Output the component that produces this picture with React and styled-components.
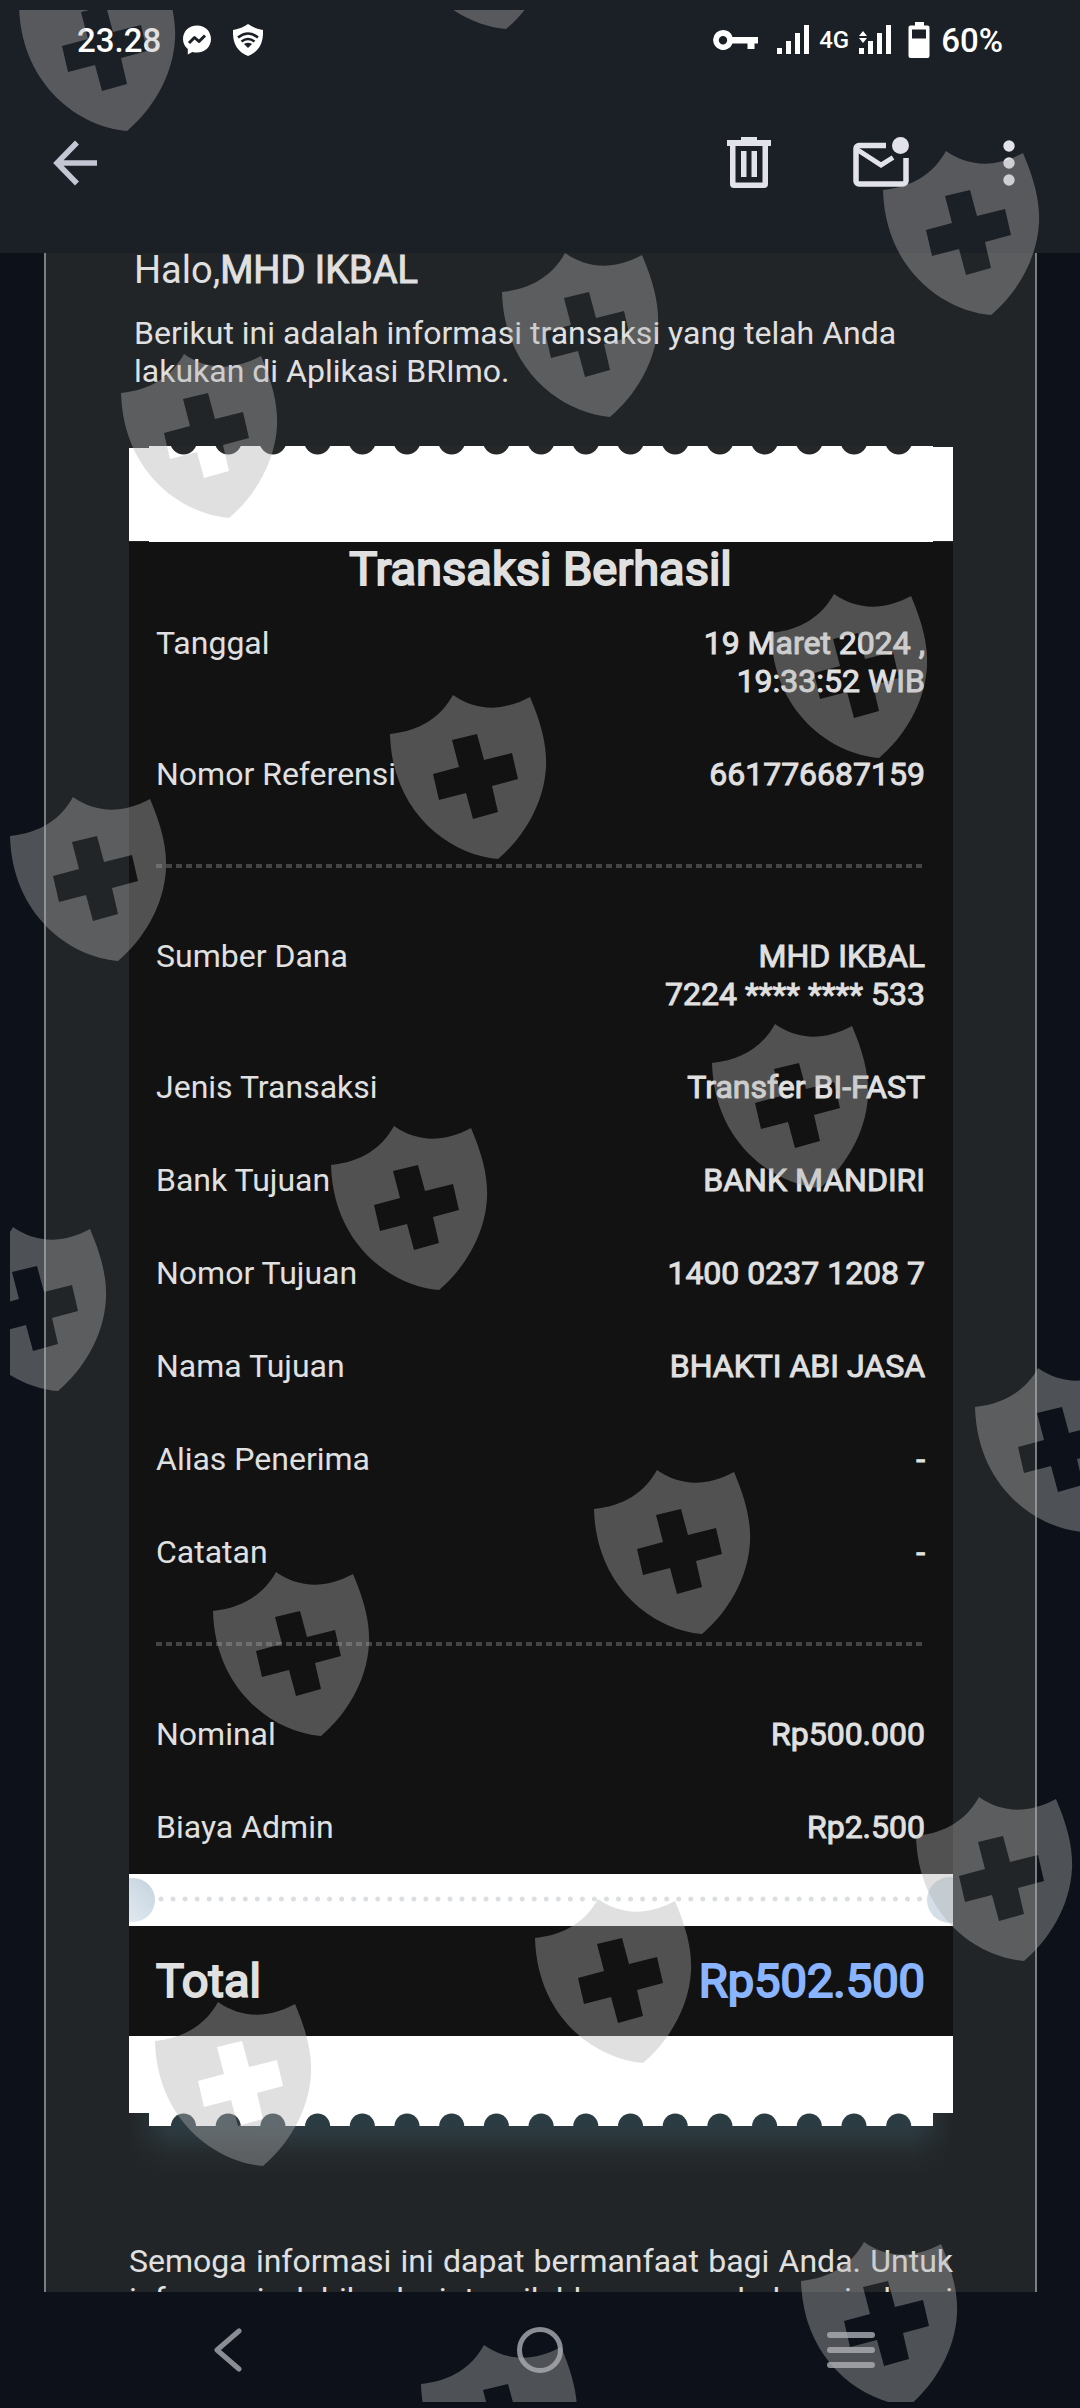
import React from 'react'
import styled, { createGlobalStyle } from 'styled-components'

const GlobalStyle = createGlobalStyle`
	* {
		box-sizing: border-box;
	}
	body {
		margin: 0;
		background-color: #0d1119;
		font-family: Roboto, "Liberation Sans", sans-serif;
	}
`

const Screen = styled.div`
	position: relative;
	display: flex;
	flex-direction: column;
	height: 100vh;
	overflow: hidden;
	color: #e0e0e0;
`

const Header = styled.header`
	flex: none;
	padding-bottom: 7px;
	background-color: #1b1f26;
`

const StatusBar = styled.div`
	display: flex;
	justify-content: space-between;
	height: 80px;
	padding: 0 77px;
	color: #ffffff;
	font-size: 33px;
	font-weight: 500;
`

const StatusGroup = styled.div`
	display: flex;
	align-items: center;
	gap: ${props => props.$gap}px;
`

const Network = styled.span`
	font-size: 24px;
`

const Toolbar = styled.div`
	display: flex;
	align-items: center;
	height: 166px;
	padding: 0 6px 0 10px;
	color: #e2e2ea;
`

const IconButton = styled.button`
	display: flex;
	align-items: center;
	justify-content: center;
	width: 130px;
	height: 120px;
	padding: 0;
	border: 0;
	background: none;
	color: inherit;
	cursor: pointer;
`

const BackButton = styled(IconButton)`
	margin-right: auto;
	color: #c4c6d4;
`

const Content = styled.main`
	flex: 1;
	min-height: 0;
	overflow: hidden;
`

const Mail = styled.article`
	margin: 0 43px 0 44px;
	padding: 0 82px 0 83px;
	border: solid #7b7f83;
	border-width: 0 2px;
	background-color: #222527;
`

const Intro = styled.div`
	padding-left: 5px;
	margin-bottom: 56px;
`

const Greeting = styled.p`
	margin: 0 0 27px;
	font-size: 38px;
	line-height: 34px;
`

const Strong = styled.strong`
	font-weight: 400;
	-webkit-text-stroke: 1px currentColor;
`

const Text = styled.p`
	margin: 0;
	font-size: 32px;
	line-height: 38px;
`

const Closing = styled(Text)`
	margin-top: 66px;
	text-align: justify;
	text-align-last: justify;
`

const Receipt = styled.section`
	> svg {
		display: block;
		width: 100%;
		height: auto;
	}
`

const Panel = styled.div`
	padding: 0 28px 1px 27px;
	background-color: #121212;
`

const Title = styled.h1`
	margin: 0;
	font-size: 47px;
	font-weight: 400;
	line-height: 54px;
	text-align: center;
	-webkit-text-stroke: 2px currentColor;
`

const Table = styled.table`
	width: 100%;
	border-collapse: collapse;
	font-size: 32px;
	line-height: 38px;
`

const Label = styled.th`
	padding: 28px 0 27px;
	font-weight: 400;
	text-align: left;
	vertical-align: top;
`

const Value = styled.td`
	padding: 28px 0 27px;
	text-align: right;
	vertical-align: top;
	-webkit-text-stroke: 1px currentColor;
`

const Divider = styled.hr`
	height: 4px;
	margin: 44px 0 41px;
	border: 0;
	background: repeating-linear-gradient(90deg, #444444 0 6px, transparent 6px 10px);
`

const Total = styled(Panel)`
	display: flex;
	justify-content: space-between;
	padding-top: 27px;
	padding-bottom: 27px;
	font-size: 47px;
	line-height: 56px;
	-webkit-text-stroke: 2px currentColor;
`

const Amount = styled.span`
	color: #8ab4ff;
`

const NavBar = styled.nav`
	flex: none;
	display: grid;
	grid-template-columns: repeat(3, 1fr);
	justify-items: center;
	height: 116px;
	padding: 0 72px;
	background-color: #0d1119;
	color: #8b8d94;
`

const NavButton = styled(IconButton)`
	height: 116px;
`

const Watermark = styled.div`
	position: absolute;
	top: 10px;
	right: 0;
	bottom: 6px;
	left: 10px;
	overflow: hidden;
	pointer-events: none;
`

const details = [
	{ label: 'Tanggal', lines: ['19 Maret 2024 ,', '19:33:52 WIB'] },
	{ label: 'Nomor Referensi', lines: ['661776687159'] },
]

const transfer = [
	{ label: 'Sumber Dana', lines: ['MHD IKBAL', '7224 **** **** 533'] },
	{ label: 'Jenis Transaksi', lines: ['Transfer BI-FAST'] },
	{ label: 'Bank Tujuan', lines: ['BANK MANDIRI'] },
	{ label: 'Nomor Tujuan', lines: ['1400 0237 1208 7'] },
	{ label: 'Nama Tujuan', lines: ['BHAKTI ABI JASA'] },
	{ label: 'Alias Penerima', lines: ['-'] },
	{ label: 'Catatan', lines: ['-'] },
]

const costs = [
	{ label: 'Nominal', lines: ['Rp500.000'] },
	{ label: 'Biaya Admin', lines: ['Rp2.500'] },
]

const shields = [
	[19, -33], [398, -135], [883, 151], [502, 253], [121, 354], [771, 594], [390, 695],
	[10, 797], [712, 1024], [331, 1126], [-50, 1227], [975, 1368], [594, 1470], [213, 1572],
	[916, 1797], [535, 1899], [155, 2002], [801, 2242], [421, 2345],
]

const holes = Array.from({ length: 17 }, (_, i) => 54.5 + i * 44.7)

function Rows({ items }) {
	return (
		<Table>
			<tbody>
				{items.map(item => (
					<tr key={item.label}>
						<Label scope="row">{item.label}</Label>
						<Value>
							{item.lines.map(line => <div key={line}>{line}</div>)}
						</Value>
					</tr>
				))}
			</tbody>
		</Table>
	)
}

function Bars({ arrows }) {
	return (
		<svg width="32" height="30" viewBox="0 0 32 30" fill="currentColor">
			<rect x="0" y="23" width="5" height="6" />
			<rect x="9" y="16" width="5" height="13" />
			<rect x="18" y="8" width="5" height="21" />
			<rect x="27" y="0" width="5" height="29" />
			{arrows && <path d="M0 11 L4 6 L8 11 Z M0 13 H8 L4 18 Z" />}
		</svg>
	)
}

function Status() {
	return (
		<StatusBar>
			<StatusGroup $gap={21}>
				<span>23.28</span>
				<svg width="30" height="30" viewBox="0 0 30 30">
					<path fill="#fff" d="M15 0.500C7 0.500 1 6.300 1 14c0 4.200 1.900 7.600 4.800 9.900V29.500l4.600-2.500c1.500.4 3 .6 4.600.6 8 0 14-5.900 14-13.600S23 .5 15 .5z" />
					<path d="M7 18 L12.500 12.500 L17 16.500 L23 10.500" fill="none" stroke="#1b1f26" strokeWidth="3" strokeLinejoin="round" />
				</svg>
				<svg width="30" height="32" viewBox="0 0 30 32">
					<path fill="#fff" d="M15 0 C19 3 24 5 30 6 C30.500 18 27 27 15 32 C3 27 -.5 18 0 6 C6 5 11 3 15 0z" />
					<g fill="none" stroke="#1b1f26" strokeWidth="2.600">
						<path d="M5 13.500 Q15 5.500 25 13.500" />
						<path d="M8.500 17.500 Q15 12.500 21.500 17.500" />
					</g>
					<path fill="#1b1f26" d="M11 20 Q15 17.500 19 20 L15 24z" />
				</svg>
			</StatusGroup>
			<StatusGroup $gap={10}>
				<svg width="54" height="22" viewBox="0 0 54 22" fill="currentColor">
					<path fillRule="evenodd" d="M10 1a10 10 0 0 1 9.500 7H45v6.500h-3.500V20h-7v-5.500H19.500A10 10 0 1 1 10 1zm0 6a4.200 4.200 0 1 0 0 8.400 4.200 4.200 0 0 0 0-8.400z" />
				</svg>
				<Bars />
				<Network>4G</Network>
				<Bars arrows />
				<svg width="30" height="38" viewBox="-3 0 30 38">
					<path fill="#fff" fillRule="evenodd" d="M11 1h9v3.500h3.500a2 2 0 0 1 2 2V35a2 2 0 0 1-2 2h-17a2 2 0 0 1-2-2V6.500a2 2 0 0 1 2-2H11zM8 8.500v9h14v-9z" />
				</svg>
				<span>60%</span>
			</StatusGroup>
		</StatusBar>
	)
}

export default class App extends React.Component {

	renderHeader() {
		return (
			<Header>
				<Status />
				<Toolbar>
					<BackButton aria-label="Kembali">
						<svg width="44" height="46" viewBox="0 0 44 46" fill="none" stroke="currentColor" strokeWidth="5.500">
							<path d="M24 2.500 L4 23 L24 43.500 M4 23 H44" />
						</svg>
					</BackButton>
					<IconButton aria-label="Hapus">
						<svg width="44" height="52" viewBox="0 0 44 52" fill="currentColor">
							<path fillRule="evenodd" d="M14 0h16v3h14v6h-3v38a4 4 0 0 1-4 4H7a4 4 0 0 1-4-4V9H0V3h14zM8.500 9v36.500h27V9z" />
							<rect x="14" y="14" width="5.500" height="26" />
							<rect x="24.500" y="14" width="5.500" height="26" />
						</svg>
					</IconButton>
					<IconButton aria-label="Tandai belum dibaca">
						<svg width="62" height="52" viewBox="-5 0 62 52">
							<path fill="none" stroke="currentColor" strokeWidth="5.500" d="M33 8.500 H6 a3 3 0 0 0-3 3 V44 a3 3 0 0 0 3 3 H50 a3 3 0 0 0 3-3 V21" />
							<path fill="none" stroke="currentColor" strokeWidth="5" d="M4 12.500 L28 28 L40 20.500" />
							<circle cx="47.500" cy="8.500" r="8.500" fill="currentColor" />
						</svg>
					</IconButton>
					<IconButton aria-label="Opsi lainnya">
						<svg width="12" height="46" viewBox="0 0 12 46" fill="currentColor">
							<circle cx="6" cy="6" r="5.700" />
							<circle cx="6" cy="23" r="5.700" />
							<circle cx="6" cy="40" r="5.700" />
						</svg>
					</IconButton>
				</Toolbar>
			</Header>
		)
	}

	renderReceipt() {
		return (
			<Receipt>
				<svg viewBox="0 0 824 96">
					<path fill="#fff" d="M0 2 H20 V0 H804 V1 H824 V95 H804 V96 H20 V95 H0 Z" />
					{holes.map(x => <circle key={x} cx={x} cy="-5" r="13.500" fill="#252728" />)}
				</svg>
				<Panel>
					<Title>Transaksi Berhasil</Title>
					<Rows items={details} />
					<Divider />
					<Rows items={transfer} />
					<Divider />
					<Rows items={costs} />
				</Panel>
				<svg viewBox="0 0 824 52">
					<defs>
						<linearGradient id="notch" x1="0" y1="1" x2="1" y2="0">
							<stop offset="0" stopColor="#e9eff4" />
							<stop offset="1" stopColor="#c3d2de" />
						</linearGradient>
					</defs>
					<rect width="824" height="52" fill="#fff" />
					<circle cx="4" cy="26" r="22" fill="url(#notch)" />
					<circle cx="821" cy="26" r="23" fill="#d3dee7" />
					<path d="M32 25 H792" stroke="#dcdfe1" strokeWidth="5" strokeLinecap="round" strokeDasharray="0 12.040" />
				</svg>
				<Total>
					<span>Total</span>
					<Amount>Rp502.500</Amount>
				</Total>
				<svg viewBox="0 0 824 140">
					<defs>
						<linearGradient id="shade" x1="0" y1="0" x2="0" y2="1">
							<stop offset="0" stopColor="#2c3c43" />
							<stop offset="0.300" stopColor="#2c3a40" />
							<stop offset="0.650" stopColor="#252a2d" />
							<stop offset="1" stopColor="#222527" />
						</linearGradient>
						<linearGradient id="sides" x1="0" y1="0" x2="1" y2="0">
							<stop offset="0" stopColor="#222527" />
							<stop offset="0.050" stopColor="#222527" stopOpacity="0" />
							<stop offset="0.950" stopColor="#222527" stopOpacity="0" />
							<stop offset="1" stopColor="#222527" />
						</linearGradient>
					</defs>
					<rect y="77" width="824" height="63" fill="url(#shade)" />
					<rect y="77" width="824" height="63" fill="url(#sides)" />
					<path fill="#fff" d="M0 0 H824 V77 H804 V90 H20 V77 H0 Z" />
					{holes.map(x => <path key={x} d={`M${x - 12.5} 90 a12.500 12.500 0 0 1 25 0z`} fill="#2c3c43" />)}
				</svg>
			</Receipt>
		)
	}

	renderNav() {
		return (
			<NavBar>
				<NavButton aria-label="Kembali">
					<svg width="30" height="44" viewBox="0 0 30 44" fill="none" stroke="currentColor" strokeWidth="5" strokeLinecap="round" strokeLinejoin="round">
						<path d="M26 3 L4 22 L26 41" />
					</svg>
				</NavButton>
				<NavButton aria-label="Beranda">
					<svg width="46" height="46" viewBox="0 0 46 46" fill="none" stroke="currentColor" strokeWidth="5">
						<circle cx="23" cy="23" r="20.500" />
					</svg>
				</NavButton>
				<NavButton aria-label="Aplikasi terbaru">
					<svg width="50" height="38" viewBox="0 0 50 38" stroke="currentColor" strokeWidth="6" strokeLinecap="round">
						<path d="M3 4 H45 M3 19 H45 M3 34 H45" />
					</svg>
				</NavButton>
			</NavBar>
		)
	}

	render() {
		return (
			<Screen>
				<GlobalStyle />
				{this.renderHeader()}
				<Content>
					<Mail>
						<Intro>
							<Greeting>Halo,<Strong>MHD IKBAL</Strong></Greeting>
							<Text>Berikut ini adalah informasi transaksi yang telah Anda lakukan di Aplikasi BRImo.</Text>
						</Intro>
						{this.renderReceipt()}
						<Closing>Semoga informasi ini dapat bermanfaat bagi Anda. Untuk informasi lebih lanjut silahkan menghubungi kami</Closing>
					</Mail>
				</Content>
				{this.renderNav()}
				<Watermark aria-hidden="true">
					<svg width="100%" height="100%">
						<defs>
							<path
								id="shield"
								fill="#b1b1b1"
								fillOpacity="0.400"
								fillRule="evenodd"
								d="M0 39 C30 36 51 22 63 0 C86 16 112 17 140 2 C152 30 157 52 156 72 C154 110 132 144 108 164 C60 160 2 118 0 39 Z M62 45 L87 39 L94 65 L122 58 L128 84 L102 91 L108 117 L83 124 L76 98 L49 105 L43 79 L69 72 Z"
							/>
						</defs>
						{shields.map(([x, y]) => <use key={`${x}:${y}`} href="#shield" x={x - 10} y={y - 10} />)}
					</svg>
				</Watermark>
			</Screen>
		)
	}
}
